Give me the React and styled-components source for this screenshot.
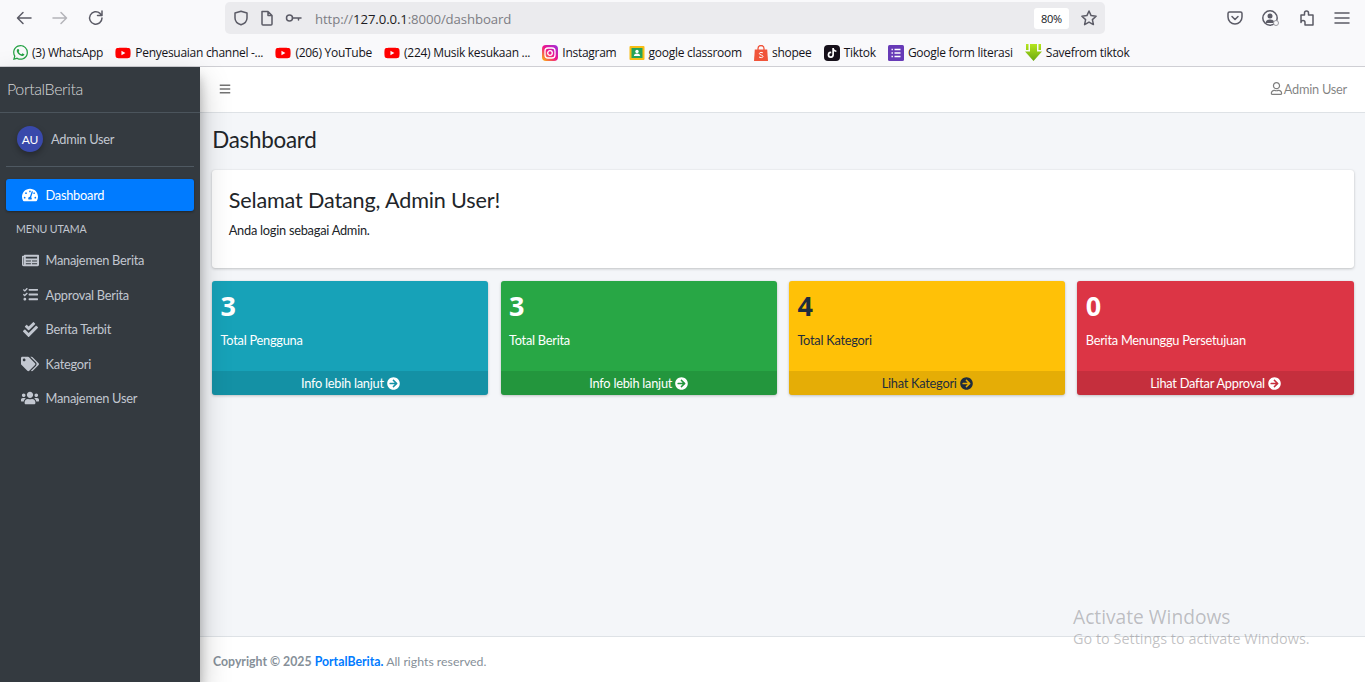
import React from "react";
import styled, { createGlobalStyle } from "styled-components";
import { FaTachometerAlt, FaNewspaper, FaTasks, FaCheckDouble, FaTags, FaUsers, FaArrowCircleRight, FaBars, FaRegUser, FaYoutube, FaTiktok } from "react-icons/fa";
import { SiWhatsapp } from "react-icons/si";

const Global = createGlobalStyle`
  html, body { margin: 0; padding: 0; height: 100%; overflow: hidden; }
  #root { height: 100%; }
  * { box-sizing: border-box; }
  body { font-family: Lato, "Liberation Sans", sans-serif; font-size: 12.8px; letter-spacing: -0.25px; color: #212529; }
`;
const Page = styled.div`display: flex; flex-direction: column; height: 682px; position: relative; overflow: hidden;`;
const Chrome = styled.header`height: 67px; background: #f9f9fb; border-bottom: 1px solid #cfcfd4; display: flex; flex-direction: column; font-family: "Open Sans", "Noto Sans", sans-serif; letter-spacing: 0;`;
const NavRow = styled.div`height: 36px; display: flex; align-items: center; position: relative;`;
const NavIcons = styled.div`display: flex; width: 225px; padding-left: 15px; gap: 18px; align-items: center;`;
const UrlBar = styled.div`width: 880px; height: 32px; background: #ebebee; border-radius: 5px; display: flex; align-items: center; padding: 0 7px 0 8px;`;
const UrlIcons = styled.div`display: flex; align-items: center; gap: 11px; margin-right: 13px;`;
const Url = styled.div`flex: 1; padding-top: 1px; font-size: 13.2px; color: #7d7d84; letter-spacing: -0.1px; span { color: #1c1b22; }`;
const Zoom = styled.div`width: 35px; height: 21px; background: #fff; border-radius: 3px; font-size: 11px; letter-spacing: -0.3px; display: flex; align-items: center; justify-content: center; color: #15141a; margin-right: 11px;`;
const RightIcons = styled.div`margin-left: auto; display: flex; align-items: center; gap: 18px; padding-right: 14px;`;
const Bookmarks = styled.div`height: 30px; display: flex; align-items: center; padding: 3px 0 0 13px; gap: 12.2px;`;
const Bookmark = styled.div`display: flex; align-items: center; gap: 4px; font-size: 12px; letter-spacing: -0.28px; color: #15141a; white-space: nowrap;`;
const Body = styled.div`flex: 1; display: flex; min-height: 0;`;
const Sidebar = styled.aside`width: 200px; flex: none; background: #343a40; box-shadow: 0 14px 28px rgba(0,0,0,.25), 0 10px 10px rgba(0,0,0,.22); position: relative; z-index: 2; display: flex; flex-direction: column;`;
const Brand = styled.div`height: 46px; border-bottom: 1px solid #4b545c; padding: 0 0 2px 7px; display: flex; align-items: center; font-size: 16px; font-weight: 300; letter-spacing: -0.4px; color: rgba(255,255,255,.8);`;
const UserPanel = styled.div`margin: 0 6px; height: 54px; border-bottom: 1px solid #4f5962; display: flex; align-items: center; padding: 0 0 1px 11px; gap: 8px; color: #c2c7d0;`;
const Avatar = styled.div`width: 26px; height: 26px; border-radius: 50%; background: #3949ab; color: #fff; font-size: 12px; display: flex; align-items: center; justify-content: center; box-shadow: 0 3px 6px rgba(0,0,0,.3);`;
const Nav = styled.nav`padding: 12px 6px 0; display: flex; flex-direction: column;`;
const NavItem = styled.a`height: ${p => p.$active ? "32px" : "34.5px"}; display: flex; align-items: center; border-radius: 3px; color: ${p => p.$active ? "#fff" : "#c2c7d0"}; background: ${p => p.$active ? "#007bff" : "transparent"}; box-shadow: ${p => p.$active ? "0 1px 3px rgba(0,0,0,.12), 0 1px 2px rgba(0,0,0,.24)" : "none"};`;
const NavIcon = styled.span`width: 39.5px; display: flex; justify-content: center; padding-left: 9px; font-size: ${p => p.$size}px;`;
const NavHeader = styled.div`height: 32px; padding: 4px 0 0 10px; display: flex; align-items: center; font-size: 10.6px; letter-spacing: -0.15px; color: #c2c7d0;`;
const Main = styled.div`flex: 1; display: flex; flex-direction: column; min-width: 0;`;
const TopBar = styled.div`height: 46px; background: #fff; border-bottom: 1px solid #dee2e6; display: flex; align-items: center; justify-content: space-between; padding: 0 18px 2px 19px; color: rgba(0,0,0,.55);`;
const TopUser = styled.div`display: flex; align-items: center; gap: 1px; color: rgba(0,0,0,.5);`;
const Content = styled.main`flex: 1; background: #f4f6f9; padding: 0 11.3px 0 12.2px; display: flex; flex-direction: column;`;
const Title = styled.h1`margin: 0; height: 57px; padding-bottom: 5px; display: flex; align-items: center; font-size: 22.4px; font-weight: 400; color: #212529;`;
const Welcome = styled.section`height: 98px; background: #fff; border-radius: 3px; box-shadow: 0 0 1px rgba(0,0,0,.125), 0 1px 3px rgba(0,0,0,.2); padding: 16px 16.5px; margin-bottom: 13px;`;
const WelcomeTitle = styled.h3`margin: 0 0 7px; font-size: 21.6px; font-weight: 400; line-height: 29px; letter-spacing: -0.15px;`;
const WelcomeText = styled.p`margin: 0;`;
const Stats = styled.div`display: grid; grid-template-columns: repeat(4, 1fr); gap: 12.1px;`;
const Box = styled.div`height: 114px; border-radius: 3px; background: ${p => p.$bg}; color: ${p => p.$fg}; box-shadow: 0 0 1px rgba(0,0,0,.125), 0 1px 3px rgba(0,0,0,.2); display: flex; flex-direction: column; overflow: hidden;`;
const BoxInner = styled.div`flex: 1; padding: 8px 8.4px;`;
const BoxNum = styled.div`font-family: "Open Sans", sans-serif; font-size: 27px; font-weight: 700; line-height: 34px; letter-spacing: 0; margin-bottom: 8px;`;
const BoxLabel = styled.div`line-height: 19px;`;
const BoxFoot = styled.div`height: 24px; background: rgba(0,0,0,.1); display: flex; align-items: center; justify-content: center; gap: 3px;`;
const Footer = styled.footer`height: 46px; background: #fff; border-top: 1px solid #dee2e6; display: flex; align-items: center; padding: 4px 0 0 13px; color: #869099; font-size: 12.3px; letter-spacing: 0; b { font-weight: 700; } a { color: #007bff; font-weight: 700; }`;
const Activate = styled.div`position: absolute; left: 1073px; top: 604px; color: rgba(120,120,125,.45); font-family: "Open Sans", sans-serif; letter-spacing: 0; z-index: 5; pointer-events: none;`;
const ActivateTitle = styled.div`font-size: 19.2px; line-height: 25px;`;
const ActivateSub = styled.div`font-size: 14.45px; line-height: 20px;`;

const S = { fill: "none", stroke: "#5b5b66", strokeWidth: 1.5, strokeLinecap: "round", strokeLinejoin: "round" };
const I = ({ w = 16, h = 16, children }) => <svg width={w} height={h} viewBox={`0 0 ${w} ${h}`}>{children}</svg>;
const TikTile = styled.span`width: 16px; height: 16px; border-radius: 4px; background: #16101a; display: flex; align-items: center; justify-content: center;`;

const Fav = {
  wa: <SiWhatsapp size={15} color="#25a244" />,
  yt: <FaYoutube size={16} color="#f00" />,
  ig: <I><defs><linearGradient id="ig" x1="0" y1="1" x2="1" y2="0"><stop offset="0" stopColor="#fdc004" /><stop offset=".5" stopColor="#f0148c" /><stop offset="1" stopColor="#9a30e0" /></linearGradient></defs><rect width="16" height="16" rx="4" fill="url(#ig)" /><rect x="3" y="3" width="10" height="10" rx="3" fill="none" stroke="#fff" strokeWidth="1.3" /><circle cx="8" cy="8" r="2.3" fill="none" stroke="#fff" strokeWidth="1.3" /></I>,
  gc: <I><rect x="0.5" y="1" width="15" height="14" rx="1" fill="#f8bd14" /><rect x="2.5" y="3" width="11" height="10" fill="#25a35a" /><circle cx="8" cy="6.5" r="1.7" fill="#fff" /><path d="M4.8 11c.4-1.8 1.6-2.5 3.2-2.5s2.8.7 3.2 2.5z" fill="#fff" /></I>,
  sp: <I w={14} h={16}><path d="M.8 4.500h12.400L14 16H0z" fill="#f0543a" /><path d="M4 5V3.500a3 3 0 0 1 6 0V5" fill="none" stroke="#f0543a" strokeWidth="1.3" /><path d="M9 8C8.400 7.200 5.400 7 5.400 8.600c0 1.800 3.600 1 3.600 2.800 0 1.600-3 1.500-4 .5" fill="none" stroke="#fff" strokeWidth="1" /></I>,
  tt: <TikTile><FaTiktok size={10} color="#fff" /></TikTile>,
  gf: <I><rect width="16" height="16" rx="1.5" fill="#673ab7" /><path d="M3.500 4.500h1.400M3.500 8h1.400M3.500 11.500h1.400M6.500 4.500h6M6.500 8h6M6.500 11.500h6" stroke="#fff" strokeWidth="1.6" /></I>,
  sf: <I w={17} h={18}><defs><linearGradient id="sf" x1="0" y1="0" x2="0" y2="1"><stop offset="0" stopColor="#b5e61d" /><stop offset="1" stopColor="#6aa80e" /></linearGradient></defs><path d="M1 0h2.500v6H1zM13.500 0H16v6h-2.500zM5 0h7v7.500h5L8.500 17 0 7.500h5z" fill="url(#sf)" /></I>,
};
const marks = [["wa", "(3) WhatsApp"], ["yt", "Penyesuaian channel -..."], ["yt", "(206) YouTube"], ["yt", "(224) Musik kesukaan ..."], ["ig", "Instagram"], ["gc", "google classroom"], ["sp", "shopee"], ["tt", "Tiktok"], ["gf", "Google form literasi"], ["sf", "Savefrom tiktok"]];
const stats = [
  ["3", "Total Pengguna", "Info lebih lanjut", "#17a2b8", "#fff"],
  ["3", "Total Berita", "Info lebih lanjut", "#28a745", "#fff"],
  ["4", "Total Kategori", "Lihat Kategori", "#ffc107", "#1f2d3d"],
  ["0", "Berita Menunggu Persetujuan", "Lihat Daftar Approval", "#dc3545", "#fff"],
];
const items = [[<FaNewspaper />, 17, "Manajemen Berita"], [<FaTasks />, 15, "Approval Berita"], [<FaCheckDouble />, 15, "Berita Terbit"], [<FaTags />, 18, "Kategori"], [<FaUsers />, 18, "Manajemen User"]];

export default function App() {
  return (
    <Page>
      <Global />
      <Chrome>
        <NavRow>
          <NavIcons>
            <I w={18} h={18}><path {...S} d="M16 9H3M8 3.500 2.500 9 8 14.500" /></I>
            <I w={18} h={18}><path {...S} stroke="#b4b4b9" d="M2 9h13M10 3.500 15.500 9 10 14.500" /></I>
            <I w={18} h={18}><path {...S} d="M15 9a6.200 6.200 0 1 1-2-4.600L15 6.500M15 2v4.500h-4.500" /></I>
          </NavIcons>
          <UrlBar>
            <UrlIcons>
              <I><path {...S} d="M8 1.200 14 3v5c0 3.500-3 5.800-6 6.800C5 13.800 2 11.500 2 8V3z" /></I>
              <I w={14} h={16}><path {...S} d="M2 1.500h6l4 4V14a1 1 0 0 1-1 1H3a1 1 0 0 1-1-1z M8 1.500V5.500h4" /></I>
              <I w={17} h={16}><circle {...S} cx="4.500" cy="8" r="3" /><path {...S} d="M7.500 8H16M13.500 8v2" /></I>
            </UrlIcons>
            <Url>http://<span>127.0.0.1</span>:8000/dashboard</Url>
            <Zoom>80%</Zoom>
            <I w={18} h={18}><path {...S} d="m9 2 2.100 4.600 5 .6-3.700 3.400 1 5L9 13.100 4.600 15.600l1-5L1.900 7.200l5-.6z" /></I>
          </UrlBar>
          <RightIcons>
            <I><path {...S} d="M2.500 2h11A1.500 1.500 0 0 1 15 3.500V7A7 7 0 0 1 1 7V3.500A1.500 1.500 0 0 1 2.500 2zM5 6.500 8 9.500l3-3" /></I>
            <I w={20} h={18}><circle {...S} cx="9" cy="9" r="7.200" /><circle cx="9" cy="7" r="2.500" fill="#5b5b66" /><path d="M4.500 14c.5-3 2.500-3.500 4.500-3.500s4 .5 4.500 3.500z" fill="#5b5b66" /><circle cx="15" cy="14" r="2.500" fill="#f9f9fb" stroke="#9a9aa0" /></I>
            <I w={16} h={18}><path {...S} d="M2 6h3.500V4a2 2 0 0 1 4 0v2H14v10H6v-2.500a2 2 0 0 0-4 0z" /></I>
            <I w={18} h={18}><path {...S} d="M2 4h14M2 9h14M2 14h14" /></I>
          </RightIcons>
        </NavRow>
        <Bookmarks>
          {marks.map(([k, t]) => <Bookmark key={t}>{Fav[k]}{t}</Bookmark>)}
        </Bookmarks>
      </Chrome>
      <Body>
        <Sidebar>
          <Brand>PortalBerita</Brand>
          <UserPanel><Avatar>AU</Avatar>Admin User</UserPanel>
          <Nav>
            <NavItem $active><NavIcon $size={16}><FaTachometerAlt /></NavIcon>Dashboard</NavItem>
            <NavHeader>MENU UTAMA</NavHeader>
            {items.map(([ic, sz, t]) => <NavItem key={t}><NavIcon $size={sz}>{ic}</NavIcon>{t}</NavItem>)}
          </Nav>
        </Sidebar>
        <Main>
          <TopBar><FaBars size={12} /><TopUser><FaRegUser size={13} />Admin User</TopUser></TopBar>
          <Content>
            <Title>Dashboard</Title>
            <Welcome>
              <WelcomeTitle>Selamat Datang, Admin User!</WelcomeTitle>
              <WelcomeText>Anda login sebagai Admin.</WelcomeText>
            </Welcome>
            <Stats>
              {stats.map(([n, l, f, bg, fg]) => (
                <Box key={l} $bg={bg} $fg={fg}>
                  <BoxInner><BoxNum>{n}</BoxNum><BoxLabel>{l}</BoxLabel></BoxInner>
                  <BoxFoot>{f} <FaArrowCircleRight size={13} /></BoxFoot>
                </Box>
              ))}
            </Stats>
          </Content>
          <Footer><span><b>Copyright © 2025 <a>PortalBerita.</a></b> All rights reserved.</span></Footer>
        </Main>
      </Body>
      <Activate><ActivateTitle>Activate Windows</ActivateTitle><ActivateSub>Go to Settings to activate Windows.</ActivateSub></Activate>
    </Page>
  );
}
